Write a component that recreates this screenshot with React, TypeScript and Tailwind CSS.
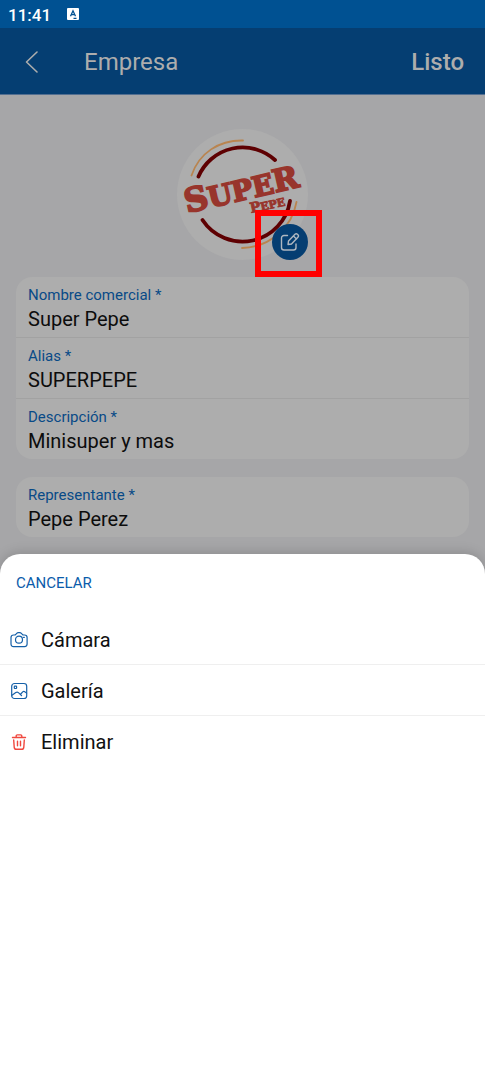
import type { ReactNode } from 'react';

interface FieldProps {
  id: string;
  label: string;
  value: string;
}

const Field = ({ id, label, value }: FieldProps) => (
  <div className="flex flex-col px-3 pt-2 pb-1">
    <label htmlFor={id} className="text-[15px] leading-5 text-[#084a87]">
      {label} *
    </label>
    <input
      id={id}
      type="text"
      defaultValue={value}
      className="h-7 w-full bg-transparent text-xl text-[#0c0c0c] outline-none"
    />
  </div>
);

const BrandLogo = () => (
  <svg viewBox="0 0 131 131" className="size-[131px]" role="img" aria-label="Super Pepe">
    <circle cx="65.5" cy="65.5" r="65.5" fill="#adadad" />
    <g fill="none" strokeLinecap="round">
      <g stroke="#5e0002" strokeWidth="3.8">
        <path d="M21.500 47.500A48 48 0 0 1 98 31" />
        <path d="M25.500 91A48 48 0 0 0 113 72" />
      </g>
      <g stroke="#b9844f" strokeWidth="1.8">
        <path d="M14.500 46.500C22 24 42 11 66 11.500" />
        <path d="M119.500 73C115 98 94 118 65 119" />
      </g>
    </g>
    <g fill="#98352c" stroke="#98352c" fontFamily="'DejaVu Serif', serif" fontWeight="700">
      <text x="10" y="84" fontSize="28" strokeWidth="1.8" transform="rotate(-13 10 84)">
        <tspan fontSize="33">S</tspan>UPE<tspan fontSize="31">R</tspan>
      </text>
      <text x="74" y="84" fontSize="11" strokeWidth="0.8" transform="rotate(-12 74 84)">
        <tspan fontSize="14">P</tspan>EPE
      </text>
    </g>
  </svg>
);

const EditIcon = () => (
  <svg viewBox="0 0 20 20" className="size-5" fill="none" stroke="#b0b8c0" strokeWidth="1.4" strokeLinecap="round" strokeLinejoin="round" aria-hidden="true">
    <path d="M7.500 3.500H4a2.500 2.500 0 0 0-2.500 2.500v9.500A2.500 2.500 0 0 0 4 18h9.500a2.500 2.500 0 0 0 2.500-2.500V12" />
    <path d="m8.500 9 6.500-6.700a1.700 1.700 0 0 1 2.400 0l.5.5a1.700 1.700 0 0 1 0 2.400L11.500 12l-3.500.5zM13.500 4l3 3" />
  </svg>
);

const CameraIcon = () => (
  <svg viewBox="0 0 18 18" className="size-[18px]" fill="none" stroke="#1560a8" strokeWidth="1.2" strokeLinecap="round" strokeLinejoin="round" aria-hidden="true">
    <path d="M3.500 4h1c.6 0 1-.3 1.300-.7l.9-.9c.5-.5.9-.7 1.600-.7h1.500c.7 0 1.100.2 1.600.7l.9.900c.3.400.7.700 1.300.7h1c1.500 0 2.500 1 2.500 2.500v6.600c0 1.500-1 2.500-2.500 2.500h-11C2 15.600 1 14.600 1 13.100V6.500C1 5 2 4 3.500 4z" />
    <circle cx="9" cy="8.700" r="3.500" />
    <path d="M13.600 6.400h.7" />
  </svg>
);

const GalleryIcon = () => (
  <svg viewBox="0 0 18 18" className="size-[18px]" fill="none" stroke="#1560a8" strokeWidth="1.2" strokeLinecap="round" strokeLinejoin="round" aria-hidden="true">
    <rect x="1.700" y="1.500" width="15" height="15" rx="2.800" />
    <rect x="4.300" y="4.200" width="2.300" height="2.300" rx="0.500" />
    <path d="m2 13.200 3.800-2.700c.9-.6 1.800-.6 2.600.1l3.200 3M10.300 12.500l2.400-2.700c.6-.6 1.400-.7 2.100-.1l1.800 1.400" />
  </svg>
);

const TrashIcon = () => (
  <svg viewBox="0 0 18 18" className="size-[18px]" fill="none" stroke="#f0483f" strokeWidth="1.4" strokeLinecap="round" strokeLinejoin="round" aria-hidden="true">
    <path d="M2.500 4.500h13M6.200 4.300V3c0-.7.400-1.100 1.100-1.100h3.400c.7 0 1.100.4 1.100 1.100v1.300M3.700 7l.5 7.100c.1 1.400.8 2.200 2.200 2.200h5.200c1.400 0 2.100-.8 2.200-2.200l.5-7.100M7.500 8.300v4.400M10.500 8.300v4.400" />
  </svg>
);

const ActionItem = ({ icon, children }: { icon: ReactNode; children: ReactNode }) => (
  <li>
    <button type="button" className="flex h-[50px] w-full items-center gap-[13px] px-[10px] pt-[2px] text-left text-xl text-[#111]">
      {icon}
      {children}
    </button>
  </li>
);

const App = () => {
  return (
    <div className="flex min-h-screen flex-col bg-[#a6a6a8] font-['Roboto',sans-serif]">
      {/* Status bar */}
      <div className="flex h-7 items-center gap-4 bg-[#005192] px-2 pt-1 text-[17px] font-medium text-white">
        <span>11:41</span>
        <svg viewBox="0 0 12 12" className="mb-1 size-3" aria-hidden="true">
          <rect width="12" height="12" rx="1" fill="#fff" />
          <path d="M3.500 8.300 6 2.800l2.500 5.500M4.500 6.700h3M6.500 10.400h3" fill="none" stroke="#005192" strokeWidth="1.300" />
        </svg>
      </div>

      {/* Header */}
      <header className="flex h-[67px] items-center border-b border-[#536f91] bg-[#053e72] pt-[2px] pr-[21px] pl-[22px] text-2xl text-[#adadad]">
        <button type="button" aria-label="Volver" className="mr-[42px]">
          <svg viewBox="0 0 20 24" className="h-6 w-5" fill="none" stroke="currentColor" strokeWidth="1.6" strokeLinecap="round" strokeLinejoin="round" aria-hidden="true">
            <path d="M15 2 4.500 12 15 22" />
          </svg>
        </button>
        <h1>Empresa</h1>
        <button type="button" className="ml-auto font-medium">
          Listo
        </button>
      </header>

      {/* Company form */}
      <main className="px-4 pt-[34px] pb-[17px]">
        <div className="relative mx-auto mb-[17px] size-[131px]">
          <BrandLogo />
          <div className="absolute -right-[14px] -bottom-[17px] flex size-[67px] items-center justify-center border-[6px] border-[#f00] pb-[3px] pl-[3px]">
            <button type="button" aria-label="Editar logo" className="flex size-9 items-center justify-center rounded-full bg-[#053e72]">
              <EditIcon />
            </button>
          </div>
        </div>

        <section className="divide-y divide-[#a2a2a2] rounded-2xl bg-[#adadad]">
          <Field id="nombre" label="Nombre comercial" value="Super Pepe" />
          <Field id="alias" label="Alias" value="SUPERPEPE" />
          <Field id="descripcion" label="Descripción" value="Minisuper y mas" />
        </section>

        <section className="mt-[18px] rounded-2xl bg-[#adadad]">
          <Field id="representante" label="Representante" value="Pepe Perez" />
        </section>
      </main>

      {/* Photo source sheet */}
      <div role="dialog" aria-label="Cambiar logo" className="flex-1 rounded-t-[20px] bg-white shadow-[0_-2px_12px_rgba(0,0,0,0.15)]">
        <button type="button" className="mt-[18px] mb-5 ml-4 block text-[15px] leading-[22px] text-[#0b5cab]">
          CANCELAR
        </button>
        <ul className="divide-y divide-[#efefef]">
          <ActionItem icon={<CameraIcon />}>Cámara</ActionItem>
          <ActionItem icon={<GalleryIcon />}>Galería</ActionItem>
          <ActionItem icon={<TrashIcon />}>Eliminar</ActionItem>
        </ul>
      </div>
    </div>
  );
};

export default App;
